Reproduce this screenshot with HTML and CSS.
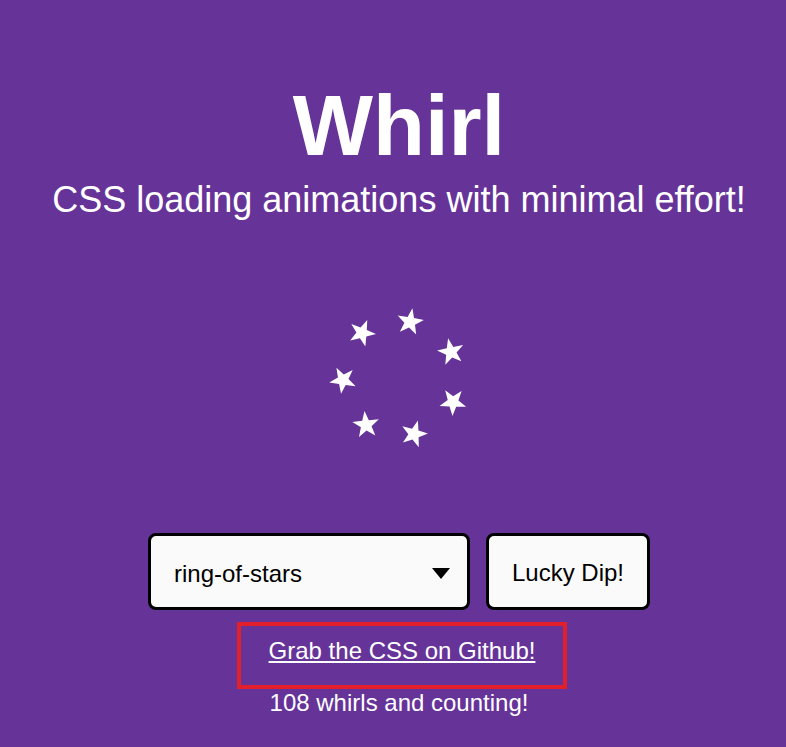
FILE: index.html
```html
<!DOCTYPE html>
<html lang="en">
<head>
  <meta charset="UTF-8">
  <meta name="viewport" content="width=device-width, initial-scale=1.0">
  <title>Whirl</title>
  <link rel="stylesheet" href="styles.css">
</head>
<body>
  <header>
    <h1>Whirl</h1>
    <p class="tagline">CSS loading animations with minimal effort!</p>
  </header>

  <!-- ring-of-stars spinner, stars placed round a circle -->
  <div class="whirl">
    <svg class="star" style="left: 67px; top: 5px; transform: rotate(10deg)" viewBox="-12 -12 24 24"><polygon points="0,-12 2.8,-3.9 11.4,-3.7 4.6,1.5 7.1,9.7 0,4.8 -7.1,9.7 -4.6,1.5 -11.4,-3.7 -2.8,-3.9"/></svg>
    <svg class="star" style="left: 108px; top: 35px; transform: rotate(60deg)" viewBox="-12 -12 24 24"><polygon points="0,-12 2.8,-3.9 11.4,-3.7 4.6,1.5 7.1,9.7 0,4.8 -7.1,9.7 -4.6,1.5 -11.4,-3.7 -2.8,-3.9"/></svg>
    <svg class="star" style="left: 110px; top: 85px; transform: rotate(110deg)" viewBox="-12 -12 24 24"><polygon points="0,-12 2.8,-3.9 11.4,-3.7 4.6,1.5 7.1,9.7 0,4.8 -7.1,9.7 -4.6,1.5 -11.4,-3.7 -2.8,-3.9"/></svg>
    <svg class="star" style="left: 71px; top: 117px; transform: rotate(160deg)" viewBox="-12 -12 24 24"><polygon points="0,-12 2.8,-3.9 11.4,-3.7 4.6,1.5 7.1,9.7 0,4.8 -7.1,9.7 -4.6,1.5 -11.4,-3.7 -2.8,-3.9"/></svg>
    <svg class="star" style="left: 23px; top: 108px; transform: rotate(210deg)" viewBox="-12 -12 24 24"><polygon points="0,-12 2.8,-3.9 11.4,-3.7 4.6,1.5 7.1,9.7 0,4.8 -7.1,9.7 -4.6,1.5 -11.4,-3.7 -2.8,-3.9"/></svg>
    <svg class="star" style="left: 0px; top: 63px; transform: rotate(260deg)" viewBox="-12 -12 24 24"><polygon points="0,-12 2.8,-3.9 11.4,-3.7 4.6,1.5 7.1,9.7 0,4.8 -7.1,9.7 -4.6,1.5 -11.4,-3.7 -2.8,-3.9"/></svg>
    <svg class="star" style="left: 19px; top: 16px; transform: rotate(310deg)" viewBox="-12 -12 24 24"><polygon points="0,-12 2.8,-3.9 11.4,-3.7 4.6,1.5 7.1,9.7 0,4.8 -7.1,9.7 -4.6,1.5 -11.4,-3.7 -2.8,-3.9"/></svg>
  </div>

  <div class="controls">
    <div class="picker">
      <select id="whirlSelect">
        <option>ring-of-stars</option>
      </select>
    </div>
    <button id="luckyBtn">Lucky Dip!</button>
  </div>

  <div class="github">
    <a href="#">Grab the CSS on Github!</a>
  </div>
  <p class="count">108 whirls and counting!</p>
</body>
</html>
```

FILE: styles.css
```css
html {
  background-color: #663399;
}
body {
  margin: 0;
  padding-left: 12px;
  color: #fff;
  font-family: "Liberation Sans", Arial, sans-serif;
  text-align: center;
}
header {
  padding-top: 77px;
}
h1 {
  font-size: 85px;
  line-height: 98px;
  margin: 0;
}
.tagline {
  font-size: 36px;
  line-height: 41px;
  margin: 4px 0 0;
}
.whirl {
  position: relative;
  width: 140px;
  height: 150px;
  margin: 83px auto 0;
}
.star {
  position: absolute;
  width: 28px;
  height: 28px;
  fill: #fff;
}
.controls {
  display: flex;
  justify-content: center;
  gap: 16px;
  margin-top: 80px;
}
.picker {
  position: relative;
}
.picker::after {
  content: "";
  position: absolute;
  right: 20px;
  top: 35px;
  border-left: 9px solid transparent;
  border-right: 9px solid transparent;
  border-top: 11px solid #000;
  pointer-events: none;
}
select {
  appearance: none;
  width: 322px;
  height: 77px;
  padding: 3px 23px 0;
  background-color: #fafafa;
  border: 3px solid #000;
  border-radius: 8px;
  font-family: inherit;
  font-size: 24px;
  color: #000;
}
button {
  width: 164px;
  height: 77px;
  padding-top: 3px;
  background-color: #fafafa;
  border: 3px solid #000;
  border-radius: 8px;
  font-family: inherit;
  font-size: 24px;
  color: #000;
  cursor: pointer;
}
.github {
  width: 322px;
  margin: 12px auto 0;
  padding: 9px 0 15px;
  border: 4px solid #e2202c;
  line-height: 32px;
  position: relative;
  left: 3px;
}
.github a {
  color: #fff;
  font-size: 24px;
}
.count {
  font-size: 24px;
  line-height: 28px;
  margin: 0;
}
```
